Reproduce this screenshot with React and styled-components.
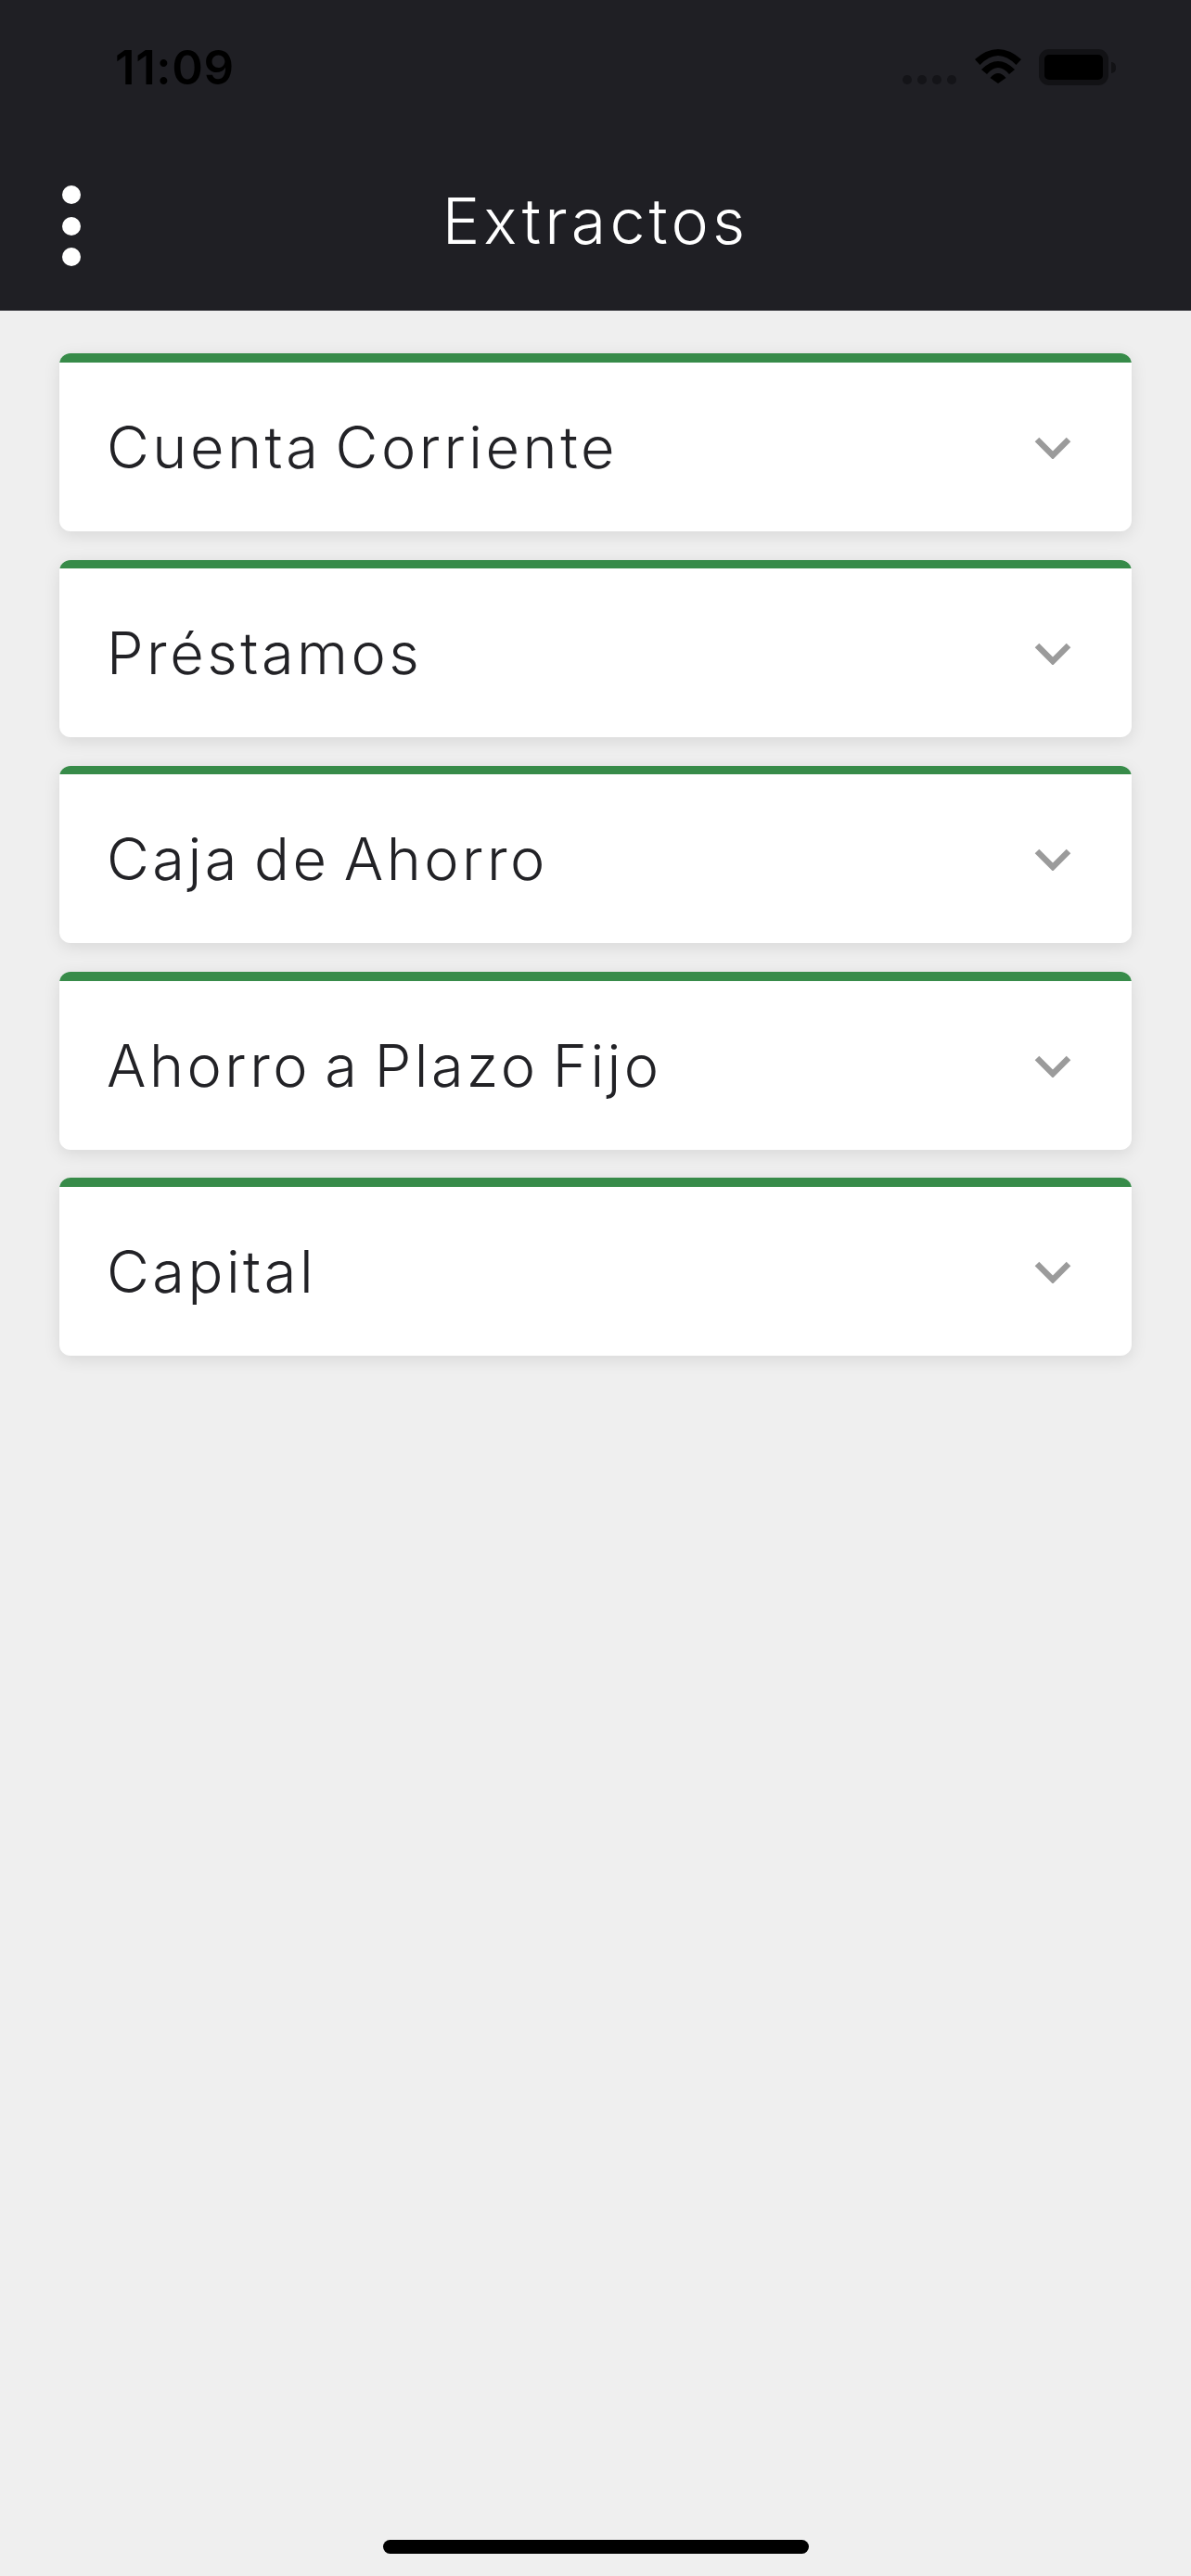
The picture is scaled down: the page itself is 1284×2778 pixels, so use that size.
import React from "react";
import styled, { createGlobalStyle } from "styled-components";

const Global = createGlobalStyle`
  html, body { margin: 0; padding: 0; background: #efefef; }
  #root { width: 1284px; }
`;

const Page = styled.div`
  width: 1284px;
  height: 2778px;
  display: flex;
  flex-direction: column;
  background: #efefef;
  font-family: Inter, "Liberation Sans", sans-serif;
`;

const Header = styled.header`
  height: 335px;
  flex: none;
  background: #1f1f24;
  display: flex;
  flex-direction: column;
`;

const StatusBar = styled.div`
  height: 132px;
  display: flex;
  align-items: flex-start;
  justify-content: space-between;
  padding: 0 82px 0 124px;
`;

const Time = styled.span`
  margin-top: 43px;
  font-size: 51px;
  line-height: 60px;
  font-weight: 600;
  letter-spacing: 0.6px;
  color: #000;
`;

const StatusIcons = styled.div`
  display: flex;
  align-items: flex-start;
  gap: 19.5px;
  margin-top: 53px;
`;

const Signal = styled.div`
  display: flex;
  gap: 6px;
  margin-top: 28px;
`;

const SignalDot = styled.i`
  width: 10px;
  height: 10px;
  border-radius: 50%;
  background: #141418;
`;

const Battery = styled.div`
  width: 75px;
  height: 39px;
  box-sizing: border-box;
  border: 6px solid #121215;
  border-radius: 11px;
  background: #000;
  position: relative;
  margin-right: 7px;
  &::after {
    content: "";
    position: absolute;
    left: 72px;
    top: 8px;
    width: 5px;
    height: 12px;
    border-radius: 0 6px 6px 0;
    background: #121215;
  }
`;

const Toolbar = styled.div`
  flex: 1;
  position: relative;
  display: flex;
  align-items: center;
  justify-content: center;
`;

const MenuButton = styled.div`
  position: absolute;
  left: 67px;
  top: 68px;
  display: flex;
  flex-direction: column;
  gap: 13.5px;
`;

const MenuDot = styled.i`
  display: block;
  width: 20px;
  height: 20px;
  border-radius: 50%;
  background: #fff;
`;

const Title = styled.h1`
  margin: 0 0 -8px;
  font-size: 68px;
  line-height: 80px;
  font-weight: 350;
  color: #fff;
  letter-spacing: 4.2px;
`;

const List = styled.main`
  display: flex;
  flex-direction: column;
  gap: 30.75px;
  padding: 46.4px 64px 0;
`;

const Card = styled.section`
  height: 191.5px;
  border-radius: 12px;
  overflow: hidden;
  background: #fff;
  display: flex;
  flex-direction: column;
  box-shadow: 0 4px 18px rgba(0, 0, 0, 0.1);
`;

const CardAccent = styled.div`
  height: 9.5px;
  flex: none;
  background: #378b49;
`;

const CardRow = styled.div`
  flex: 1;
  display: flex;
  align-items: center;
  justify-content: space-between;
  padding: 0 65px 0 51px;
`;

const CardLabel = styled.span`
  font-size: 63px;
  line-height: 76px;
  font-weight: 350;
  letter-spacing: 3.5px;
  word-spacing: -6px;
  color: #222226;
`;

const ChevronIcon = styled.svg`
  width: 40px;
  height: 24px;
  margin-top: 2px;
  flex: none;
`;

const HomeIndicator = styled.div`
  width: 459px;
  height: 15px;
  margin: auto auto 24px;
  border-radius: 8px;
  background: #000;
`;

const Chevron = () => (
  <ChevronIcon viewBox="0 0 40 24" aria-hidden="true">
    <path d="M3 3 L20 20 L37 3" fill="none" stroke="#9b9b9b" strokeWidth="6.5" />
  </ChevronIcon>
);

const Wifi = () => (
  <svg width="50" height="37" viewBox="0 0 50 37" aria-hidden="true">
    <path
      fill="#000"
      d="M0 11 Q25 -11 50 11 L44.5 17 Q25 -3 5.5 17 Z M7 22 Q25 4 43 22 L37 27 Q25 13 13 27 Z M16.5 31 Q25 21 33.5 31 L25 37 Z"
    />
  </svg>
);

const accounts = ["Cuenta Corriente", "Préstamos", "Caja de Ahorro", "Ahorro a Plazo Fijo", "Capital"];

export default function App() {
  return (
    <Page>
      <Global />
      <Header>
        <StatusBar>
          <Time>11:09</Time>
          <StatusIcons>
            <Signal>
              {[0, 1, 2, 3].map((i) => (
                <SignalDot key={i} />
              ))}
            </Signal>
            <Wifi />
            <Battery />
          </StatusIcons>
        </StatusBar>
        <Toolbar>
          <MenuButton>
            <MenuDot />
            <MenuDot />
            <MenuDot />
          </MenuButton>
          <Title>Extractos</Title>
        </Toolbar>
      </Header>
      <List>
        {accounts.map((name) => (
          <Card key={name}>
            <CardAccent />
            <CardRow>
              <CardLabel>{name}</CardLabel>
              <Chevron />
            </CardRow>
          </Card>
        ))}
      </List>
      <HomeIndicator />
    </Page>
  );
}
